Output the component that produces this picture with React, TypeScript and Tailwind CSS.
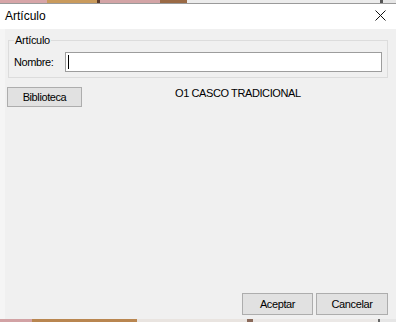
const font = { fontFamily: '"Liberation Sans", Arial, sans-serif' };

function Strip({ segs }: { segs: [number, string][] }) {
  return (
    <div className="flex h-[3px] w-full shrink-0">
      {segs.map(([w, c], i) => (
        <div key={i} className="h-full" style={{ width: w, backgroundColor: c }} />
      ))}
    </div>
  );
}

function WinButton({ label, className }: { label: string; className: string }) {
  return (
    <button
      className={`flex items-center justify-center border border-[#adadad] bg-[#e1e1e1] text-[11px] leading-[13px] tracking-[-0.4px] text-black ${className}`}
    >
      {label}
    </button>
  );
}

export default function App() {
  return (
    <div className="flex h-[322px] w-[396px] flex-col overflow-hidden bg-white text-black" style={font}>
      <Strip
        segs={[
          [47, "#d7a5a8"],
          [50, "#c99a5c"],
          [3, "#5a3a2a"],
          [60, "#d3a4a6"],
          [27, "#9a6a45"],
          [193, "#ececec"],
          [3, "#555555"],
          [13, "#e6e6e6"],
        ]}
      />
      <div className="h-px w-full shrink-0 bg-[#9a9a9a]" />

      {/* title bar */}
      <div className="flex h-[25px] shrink-0 items-start justify-between bg-white pl-[5px] pr-[10px]">
        <span className="pt-[5px] text-[12px] leading-[14px]">Artículo</span>
        <svg className="mt-[6px]" width="11" height="11" viewBox="0 0 11 11">
          <path d="M0.5 0.5 L10.5 10.5 M10.5 0.5 L0.5 10.5" stroke="#111" strokeWidth="1" fill="none" />
        </svg>
      </div>

      {/* client area */}
      <div className="flex flex-1 flex-col border-l-[5px] border-l-[#f5f5f5] bg-[#f0f0f0] text-[11px] tracking-[-0.4px]">
        <fieldset className="ml-[3px] mt-[5px] w-[380px] border border-[#dcdcdc] pb-[5px]">
          <legend className="ml-[5px] px-[1px] leading-[12px] tracking-[-0.3px]">Artículo</legend>
          <div className="flex items-center pt-[6px]">
            <span className="w-[56px] pl-[5px] leading-[13px]">Nombre:</span>
            <div className="flex h-[20px] w-[317px] items-center border border-[#9d9d9d] bg-white pl-[2px]">
              <span className="h-[14px] w-px bg-black" />
            </div>
          </div>
        </fieldset>

        <div className="mt-[9px] flex items-start">
          <WinButton label="Biblioteca" className="ml-[2px] h-[20px] w-[75px]" />
          <span className="ml-[93px] leading-[13px]">O1 CASCO TRADICIONAL</span>
        </div>

        <div className="mt-auto flex justify-end gap-[3px] pb-[4px] pr-[8px]">
          <WinButton label="Aceptar" className="h-[22px] w-[71px]" />
          <WinButton label="Cancelar" className="h-[22px] w-[72px]" />
        </div>
      </div>

      <Strip
        segs={[
          [32, "#d2a2a4"],
          [105, "#b98650"],
          [110, "#e9e4e0"],
          [6, "#8a6a5a"],
          [125, "#ebe8e6"],
          [2, "#666666"],
          [16, "#e6e6e6"],
        ]}
      />
    </div>
  );
}
